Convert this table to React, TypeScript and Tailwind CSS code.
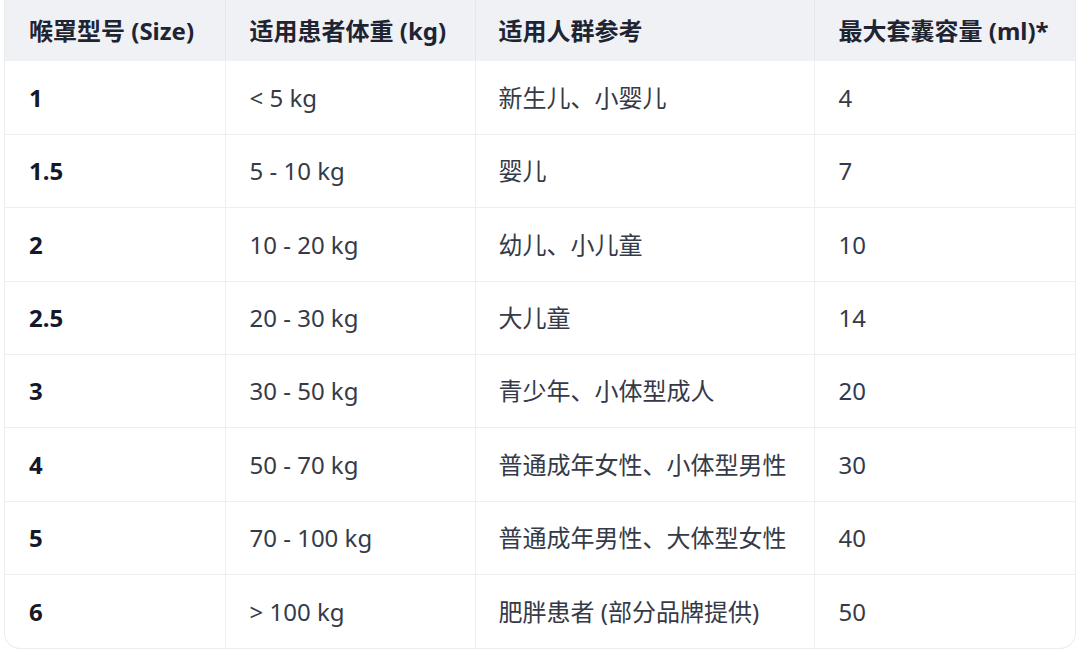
import React from 'react';

const rows = [
  { size: '1', weight: '< 5 kg', group: '新生儿、小婴儿', cuff: '4' },
  { size: '1.5', weight: '5 - 10 kg', group: '婴儿', cuff: '7' },
  { size: '2', weight: '10 - 20 kg', group: '幼儿、小儿童', cuff: '10' },
  { size: '2.5', weight: '20 - 30 kg', group: '大儿童', cuff: '14' },
  { size: '3', weight: '30 - 50 kg', group: '青少年、小体型成人', cuff: '20' },
  { size: '4', weight: '50 - 70 kg', group: '普通成年女性、小体型男性', cuff: '30' },
  { size: '5', weight: '70 - 100 kg', group: '普通成年男性、大体型女性', cuff: '40' },
  { size: '6', weight: '> 100 kg', group: '肥胖患者 (部分品牌提供)', cuff: '50' },
];

export default function App() {
  return (
    <div
      className="w-[1080px] h-[660px] bg-white px-1 overflow-hidden"
      style={{ fontFamily: '"Noto Sans", "Noto Sans CJK SC", sans-serif' }}
    >
      <div className="border-x border-b border-[#ebecef] rounded-b-2xl overflow-hidden">
        <table className="w-full border-collapse text-left text-[24px] leading-[1.4]">
          <colgroup>
            <col className="w-[220px]" />
            <col className="w-[250px]" />
            <col className="w-[339px]" />
            <col />
          </colgroup>
          <thead>
            <tr className="h-[61px] bg-[#f0f1f4] text-[#1f2433]">
              <th className="px-6 font-bold">喉罩型号 (Size)</th>
              <th className="px-6 font-bold border-l border-[#e6e7eb]">适用患者体重 (kg)</th>
              <th className="pl-[23px] pr-6 font-bold border-l border-[#e6e7eb]">适用人群参考</th>
              <th className="px-6 font-bold border-l border-[#e6e7eb]">最大套囊容量 (ml)*</th>
            </tr>
          </thead>
          <tbody className="text-[#353a48]">
            {rows.map((r, i) => (
              <tr key={i} className={`h-[73.375px] ${i > 0 ? 'border-t border-[#eeeff2]' : ''}`}>
                <td className="px-6 font-bold text-[#141828]">{r.size}</td>
                <td className="px-6 border-l border-[#eeeff2]">{r.weight}</td>
                <td className="pl-[23px] pr-6 border-l border-[#eeeff2]">{r.group}</td>
                <td className="px-6 border-l border-[#eeeff2]">{r.cuff}</td>
              </tr>
            ))}
          </tbody>
        </table>
      </div>
    </div>
  );
}
